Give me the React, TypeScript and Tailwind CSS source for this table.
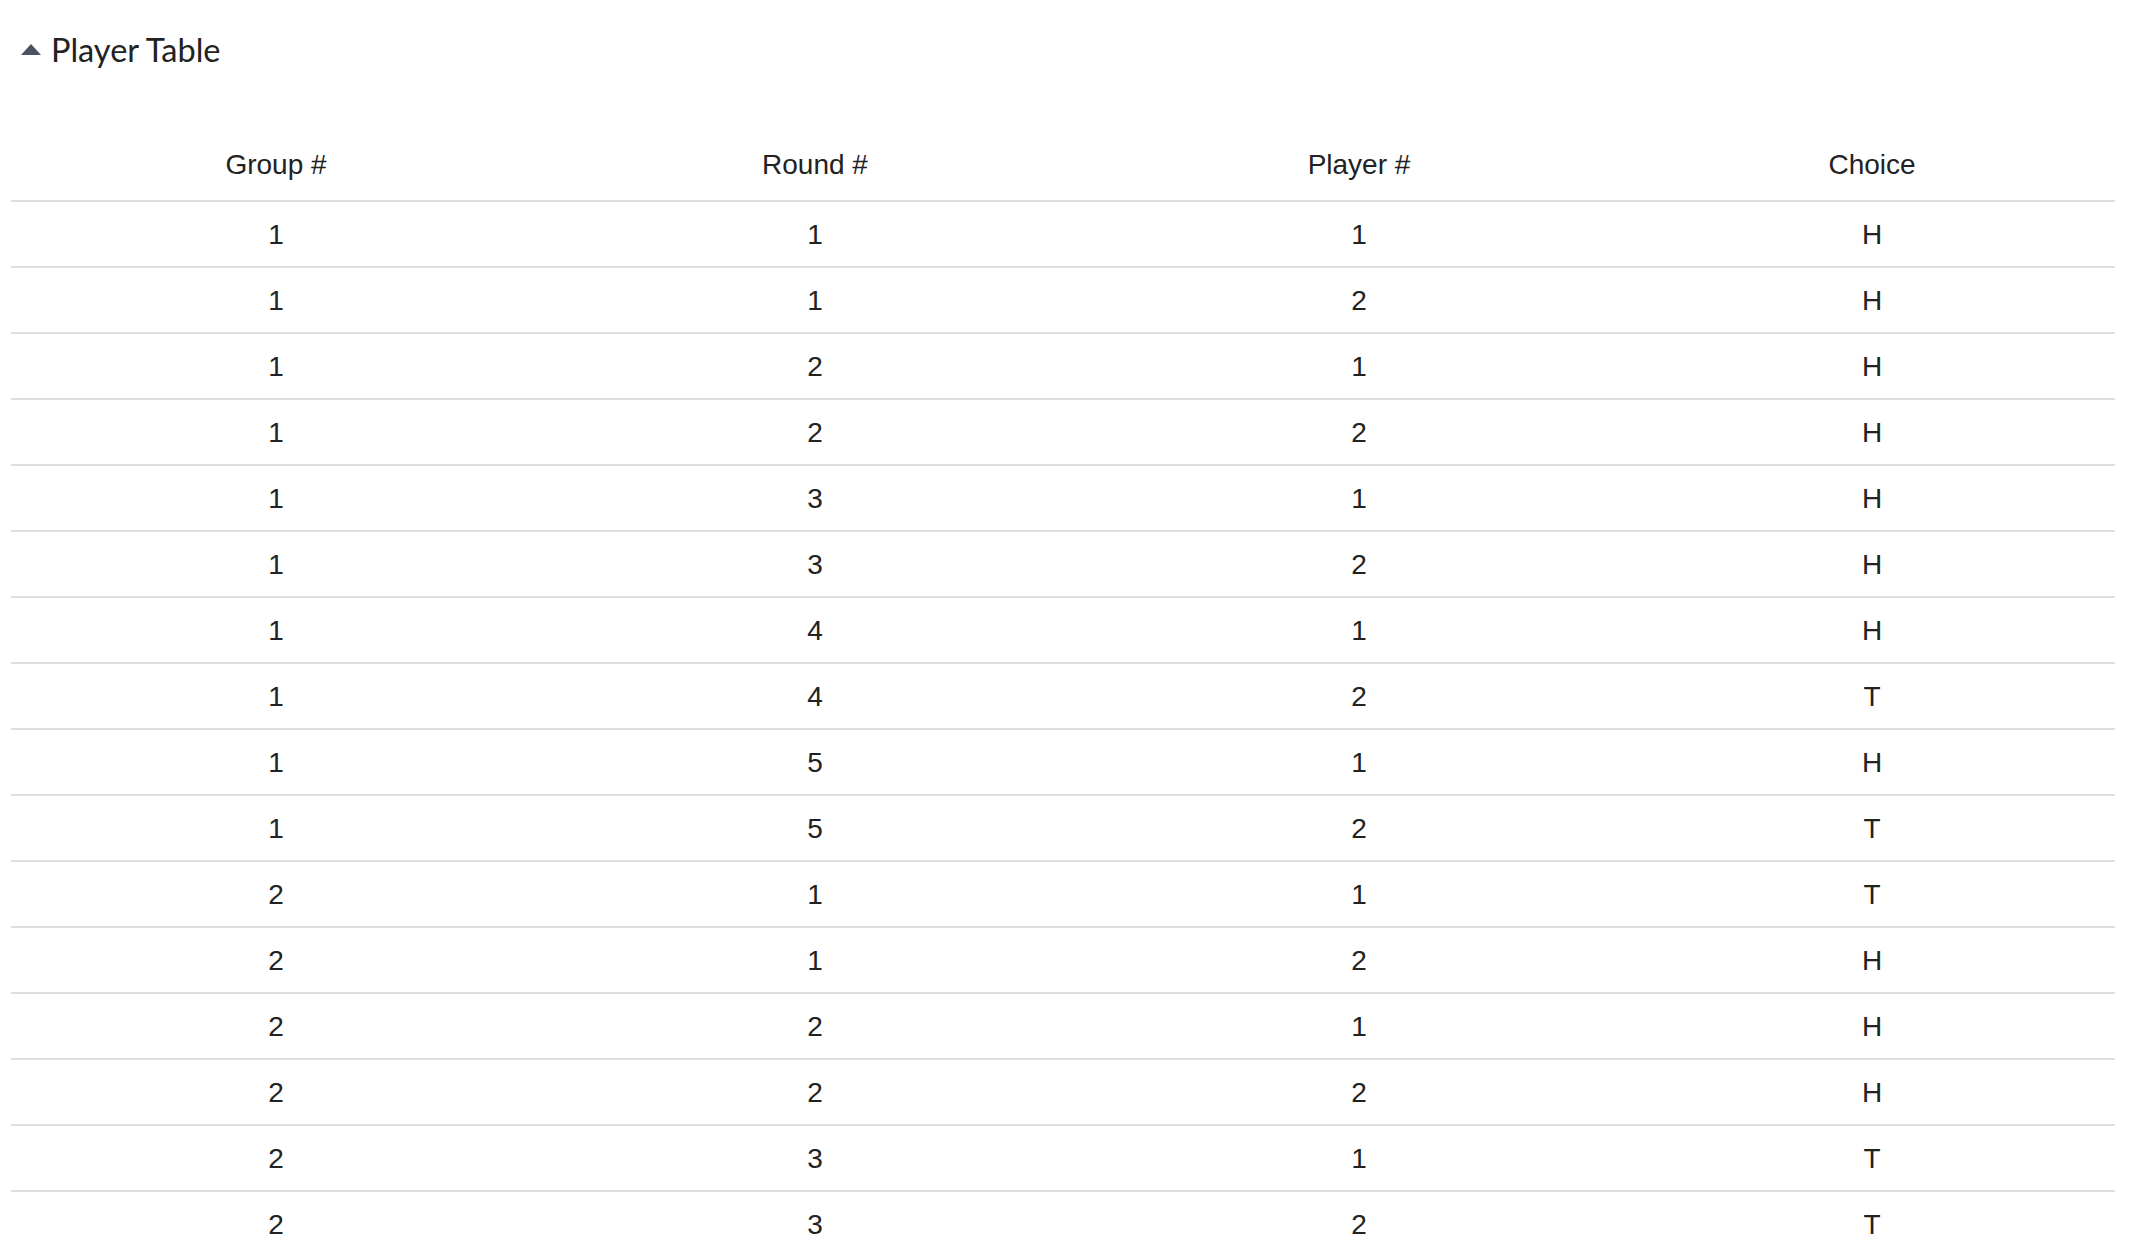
import React from "react";

const rows: [number, number, number, string][] = [
  [1, 1, 1, "H"],
  [1, 1, 2, "H"],
  [1, 2, 1, "H"],
  [1, 2, 2, "H"],
  [1, 3, 1, "H"],
  [1, 3, 2, "H"],
  [1, 4, 1, "H"],
  [1, 4, 2, "T"],
  [1, 5, 1, "H"],
  [1, 5, 2, "T"],
  [2, 1, 1, "T"],
  [2, 1, 2, "H"],
  [2, 2, 1, "H"],
  [2, 2, 2, "H"],
  [2, 3, 1, "T"],
  [2, 3, 2, "T"],
];

const headers = ["Group #", "Round #", "Player #", "Choice"];

const App = () => {
  return (
    <div className="min-h-screen bg-white pt-[30px] text-[#222]">
      <button className="flex items-center gap-[10px] pl-[21px] h-[40px]">
        <svg width="20" height="11" viewBox="0 0 20 11" className="block -mt-[2px]">
          <path d="M10 0 L20 11 L0 11 Z" fill="#4a5362" />
        </svg>
        <span className="text-[32.5px] leading-[40px] text-[#222]" style={{ fontFamily: "Lato, 'Noto Sans', sans-serif" }}>
          Player Table
        </span>
      </button>

      <table className="ml-[11px] mt-[59px] w-[2104px] table-fixed font-['Liberation_Sans',Arial,sans-serif] text-[28px]">
        <colgroup>
          <col className="w-[530px]" />
          <col className="w-[548px]" />
          <col className="w-[540px]" />
          <col className="w-[486px]" />
        </colgroup>
        <thead>
          <tr className="border-b-2 border-[#dedede]">
            {headers.map((h) => (
              <th key={h} className="pt-[16px] pb-[15px] leading-[40px] font-normal text-center">
                {h}
              </th>
            ))}
          </tr>
        </thead>
        <tbody>
          {rows.map((r, i) => (
            <tr key={i} className="border-b-2 border-[#dedede]">
              {r.map((c, j) => (
                <td key={j} className="h-[66px] p-0 pt-[2px] text-center leading-[40px]">
                  {c}
                </td>
              ))}
            </tr>
          ))}
        </tbody>
      </table>
    </div>
  );
};

export default App;
